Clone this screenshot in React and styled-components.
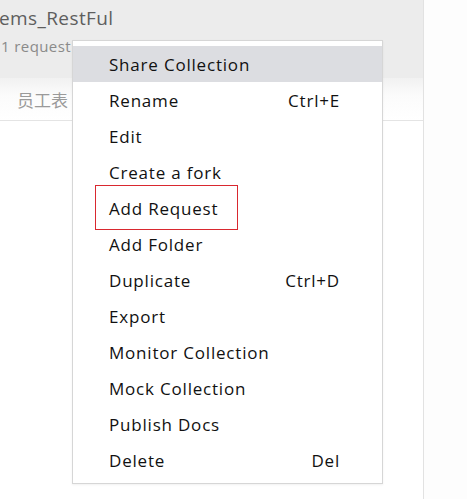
import React from "react";
import styled, { createGlobalStyle } from "styled-components";

const Global = createGlobalStyle`
  html, body { margin: 0; padding: 0; background: #fdfdfd; }
  body { font-family: "Open Sans", "Noto Sans CJK SC", sans-serif; }
`;

const Page = styled.div`
  position: relative;
  width: 467px;
  height: 499px;
  overflow: hidden;
  display: flex;
`;

const Sidebar = styled.div`
  width: 423px;
  display: flex;
  flex-direction: column;
  border-right: 1px solid #e2e2e2;
  background: #ffffff;
`;

const Header = styled.div`
  height: 78px;
  background: #ececec;
  display: flex;
  flex-direction: column;
  padding-left: 1px;
  box-sizing: border-box;
`;

const Title = styled.div`
  font-size: 19px;
  letter-spacing: 0.4px;
  color: #5e5e5e;
  line-height: 24px;
  margin-top: 6px;
  margin-left: -2px;
`;

const Sub = styled.div`
  font-size: 15px;
  letter-spacing: 0.4px;
  color: #8a8a8a;
  line-height: 20px;
  margin-top: 6px;
`;

const TabRow = styled.div`
  height: 43px;
  box-sizing: border-box;
  border-bottom: 1px solid #e4e4e4;
  background: linear-gradient(to bottom, #f1f1f1 0%, #fbfbfb 40%, #ffffff 100%);
  display: flex;
  align-items: center;
  padding-left: 17px;
  font-size: 17px;
  color: #9a9a9a;
  font-family: "Noto Sans CJK SC", sans-serif;
`;

const Rest = styled.div`
  flex: 1;
`;

const Menu = styled.ul`
  position: absolute;
  left: 72px;
  top: 40px;
  width: 311px;
  box-sizing: border-box;
  margin: 0;
  padding: 5px 0 5px;
  list-style: none;
  background: #ffffff;
  border: 1px solid #d6d6d6;
  box-shadow: 0 1px 2px rgba(0,0,0,0.06);
`;

const Item = styled.li`
  height: 36px;
  display: flex;
  align-items: center;
  justify-content: space-between;
  padding: 1px 43px 0 36px;
  box-sizing: border-box;
  font-size: 17px;
  letter-spacing: 0.8px;
  color: #111111;
  background: ${(p) => (p.$active ? "#dcdde1" : "transparent")};
`;

const Shortcut = styled.span`
  color: #111111;
  margin-right: -1px;
`;

const Callout = styled.div`
  position: absolute;
  left: 95px;
  top: 185px;
  width: 143px;
  height: 45px;
  box-sizing: border-box;
  border: 1px solid #d9282f;
`;

const items = [
  ["Share Collection", null, true],
  ["Rename", "Ctrl+E"],
  ["Edit"],
  ["Create a fork"],
  ["Add Request"],
  ["Add Folder"],
  ["Duplicate", "Ctrl+D"],
  ["Export"],
  ["Monitor Collection"],
  ["Mock Collection"],
  ["Publish Docs"],
  ["Delete", "Del"],
];

export default function App() {
  return (
    <Page>
      <Global />
      <Sidebar>
        <Header>
          <Title>ems_RestFul</Title>
          <Sub>1 request</Sub>
        </Header>
        <TabRow>员工表</TabRow>
        <Rest />
      </Sidebar>
      <Menu>
        {items.map(([label, sc, active]) => (
          <Item key={label} $active={active}>
            <span>{label}</span>
            {sc && <Shortcut>{sc}</Shortcut>}
          </Item>
        ))}
      </Menu>
      <Callout />
    </Page>
  );
}
